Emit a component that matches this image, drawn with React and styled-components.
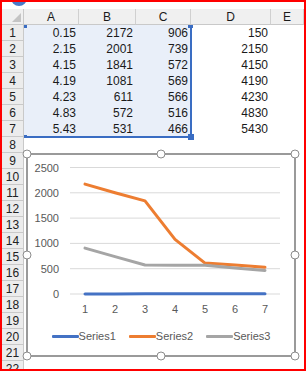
import styled, { createGlobalStyle } from "styled-components";

const GlobalStyle = createGlobalStyle`
  body {
    margin: 0;
    background: #ffffff;
  }
`;

const COLS = ["A", "B", "C", "D", "E"];
const ROWS = [
  [0.15, 2172, 906, 150],
  [2.15, 2001, 739, 2150],
  [4.15, 1841, 572, 4150],
  [4.19, 1081, 569, 4190],
  [4.23, 611, 566, 4230],
  [4.83, 572, 516, 4830],
  [5.43, 531, 466, 5430],
];
const ROW_COUNT = 22;

const SERIES = [
  { name: "Series1", color: "#4472c4", values: ROWS.map((r) => r[0]) },
  { name: "Series2", color: "#ed7d31", values: ROWS.map((r) => r[1]) },
  { name: "Series3", color: "#a5a5a5", values: ROWS.map((r) => r[2]) },
];

const TICKS = [2500, 2000, 1500, 1000, 500, 0];
const yOf = (v) => 139 - v * (126.5 / 2500);
const xOf = (i) => 57 + i * 30;

const App = () => {
  return (
    <>
      <GlobalStyle />
      <Frame>
        <TopDot />
        <Sheet>
          <Corner />
          {COLS.map((c) => (
            <ColHeader key={c}>{c}</ColHeader>
          ))}
          {Array.from({ length: ROW_COUNT }, (_, r) => {
            const data = ROWS[r];
            return [
              <RowHeader key={`h${r}`}>{r + 1}</RowHeader>,
              ...COLS.map((c, ci) => (
                <Cell key={`${r}${c}`} $selected={!!data && ci < 3}>
                  {data && ci < 4 ? data[ci] : ""}
                </Cell>
              )),
            ];
          })}
        </Sheet>

        <Selection>
          <Dot $pos="tl" />
          <Dot $pos="tr" $wide />
          <Dot $pos="bl" />
          <Dot $pos="br" $big />
        </Selection>

        <Chart>
          <svg width="266" height="170">
            {TICKS.map((t) => (
              <g key={t}>
                {t > 0 && (
                  <line x1="42" x2="252" y1={yOf(t)} y2={yOf(t)} stroke="#d9d9d9" strokeWidth="1" />
                )}
                <AxisText x="31" y={yOf(t) + 4} textAnchor="end">
                  {t}
                </AxisText>
              </g>
            ))}
            <line x1="42" x2="252" y1={yOf(0)} y2={yOf(0)} stroke="#d9d9d9" strokeWidth="1" />
            {ROWS.map((_, i) => (
              <AxisText key={i} x={xOf(i)} y="158" textAnchor="middle">
                {i + 1}
              </AxisText>
            ))}
            {SERIES.map((s) => (
              <polyline
                key={s.name}
                points={s.values.map((v, i) => `${xOf(i)},${yOf(v)}`).join(" ")}
                fill="none"
                stroke={s.color}
                strokeWidth="3"
                strokeLinejoin="round"
                strokeLinecap="round"
              />
            ))}
          </svg>
          <Legend>
            {SERIES.map((s) => (
              <LegendItem key={s.name}>
                <LegendLine $color={s.color} />
                {s.name}
              </LegendItem>
            ))}
          </Legend>
          <Handle $x="start" $y="start" />
          <Handle $x="mid" $y="start" />
          <Handle $x="end" $y="start" />
          <Handle $x="start" $y="mid" />
          <Handle $x="end" $y="mid" />
          <Handle $x="start" $y="end" />
          <Handle $x="mid" $y="end" />
          <Handle $x="end" $y="end" />
        </Chart>
      </Frame>
    </>
  );
};

export default App;

const Frame = styled.div`
  position: relative;
  box-sizing: border-box;
  width: 306px;
  height: 371px;
  border: 2px solid #ff0000;
  overflow: hidden;
  padding-top: 7px;
  font-family: "Liberation Sans", Arial, sans-serif;
`;

const TopDot = styled.div`
  position: absolute;
  left: 9px;
  top: -12px;
  width: 16px;
  height: 16px;
  border-radius: 50%;
  background: #4a7bc8;
`;

const Sheet = styled.div`
  display: grid;
  grid-template-columns: 22px 55px 57px 55px 80px 1fr;
  grid-auto-rows: 16px;
  font-size: 11px;
  color: #1a1a1a;
`;

const Corner = styled.div`
  position: relative;
  box-sizing: border-box;
  background: #f0f0f0;
  border-right: 1px solid #c9c9c9;
  border-bottom: 1px solid #c9c9c9;
  &::after {
    content: "";
    position: absolute;
    right: 2px;
    bottom: 2px;
    border-left: 9px solid transparent;
    border-bottom: 9px solid #c4c4c4;
  }
`;

const ColHeader = styled.div`
  box-sizing: border-box;
  display: flex;
  align-items: center;
  justify-content: center;
  background: #f0f0f0;
  border-right: 1px solid #d0d0d0;
  border-bottom: 1px solid #c9c9c9;
  font-size: 12px;
`;

const RowHeader = styled.div`
  box-sizing: border-box;
  display: flex;
  align-items: center;
  justify-content: center;
  background: #ececec;
  border-right: 1px solid #c9c9c9;
  border-bottom: 1px solid #c9c9c9;
  font-size: 12px;
  color: #222;
`;

const Cell = styled.div`
  display: flex;
  align-items: center;
  justify-content: flex-end;
  padding-right: 3px;
  background: ${(p) => (p.$selected ? "#e9eff9" : "#ffffff")};
  font-size: 12px;
`;

const Selection = styled.div`
  position: absolute;
  left: 22px;
  top: 23px;
  width: 166px;
  height: 111px;
  border-right: 2px solid #3a6dc3;
  border-bottom: 2px solid #3a6dc3;
`;

const Dot = styled.div`
  position: absolute;
  background: #3a6dc3;
  width: ${(p) => (p.$big ? 6 : p.$wide ? 5 : 3)}px;
  height: ${(p) => (p.$big ? 6 : 3)}px;
  ${(p) =>
    p.$pos === "tl"
      ? "left: 0; top: 0;"
      : p.$pos === "tr"
      ? "right: -3px; top: 0;"
      : p.$pos === "bl"
      ? "left: 0; bottom: -2px;"
      : "right: -4px; bottom: -4px;"}
`;

const Chart = styled.div`
  position: absolute;
  left: 24px;
  top: 151px;
  box-sizing: border-box;
  width: 270px;
  height: 204px;
  border: 2px solid #9a9a9a;
  background: #ffffff;
  display: flex;
  flex-direction: column;
  svg {
    display: block;
  }
`;

const AxisText = styled.text`
  font-family: "Liberation Sans", Arial, sans-serif;
  font-size: 11px;
  fill: #595959;
`;

const Legend = styled.div`
  height: 22px;
  display: flex;
  align-items: center;
  justify-content: center;
  gap: 13px;
  font-size: 11px;
  color: #595959;
`;

const LegendItem = styled.div`
  display: flex;
  align-items: center;
`;

const LegendLine = styled.span`
  width: 27px;
  height: 3px;
  border-radius: 1px;
  background: ${(p) => p.$color};
`;

const POS = { start: "-1px", mid: "50%", end: "calc(100% + 1px)" };

const Handle = styled.div`
  position: absolute;
  left: ${(p) => POS[p.$x]};
  top: ${(p) => POS[p.$y]};
  transform: translate(-50%, -50%);
  box-sizing: border-box;
  width: 9px;
  height: 9px;
  border-radius: 50%;
  border: 1.5px solid #8c8c8c;
  background: #ffffff;
`;
